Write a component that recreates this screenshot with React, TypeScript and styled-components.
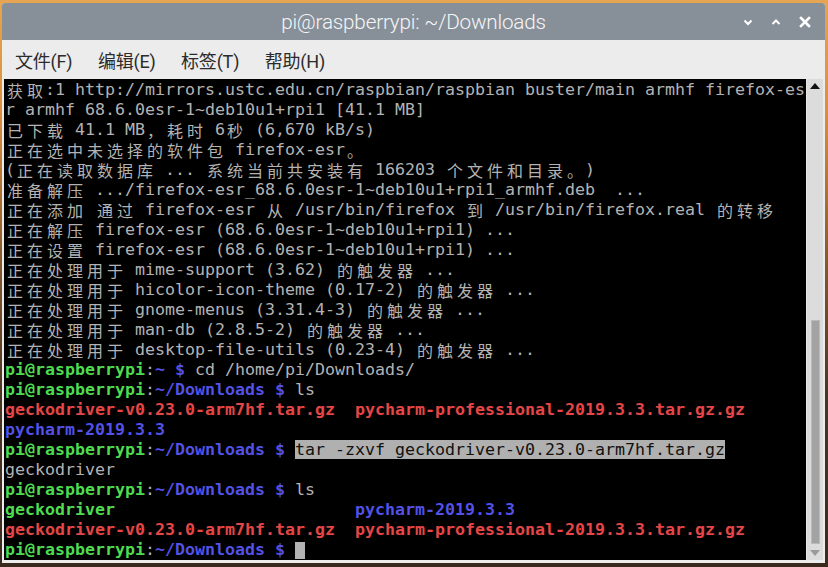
import React from "react";
import styled, { createGlobalStyle } from "styled-components";

const Global = createGlobalStyle`
  html, body { margin: 0; padding: 0; }
  body {
    width: 828px;
    height: 567px;
    overflow: hidden;
    background: linear-gradient(to bottom, #e6a552 0%, #d98f3c 20%, #8a5a2e 45%, #4a3422 70%, #3a2a1e 100%);
  }
`;

const Window = styled.div`
  position: relative;
  margin: 3px 3px 0 2px;
  width: 823px;
  height: 560px;
  display: flex;
  flex-direction: column;
  background: #ececec;
  border-radius: 3px 3px 0 0;
  overflow: hidden;
`;

const TitleBar = styled.div`
  height: 37px;
  flex: none;
  background: #878f99;
  display: flex;
  align-items: center;
  justify-content: center;
  position: relative;
`;

const Title = styled.div`
  font-family: Roboto, "Liberation Sans", sans-serif;
  font-weight: 300;
  font-size: 20.7px;
  color: #f5f6f7;
  letter-spacing: -0.2px;
`;

const Controls = styled.div`
  position: absolute;
  right: 14px;
  top: 0;
  height: 100%;
  display: flex;
  align-items: center;
  gap: 18px;
`;

const MenuBar = styled.div`
  height: 39px;
  flex: none;
  display: flex;
  align-items: center;
  padding-left: 13px;
  gap: 25.5px;
  background: #ececec;
`;

const MenuItem = styled.span`
  font-family: Roboto, "Noto Sans CJK SC", sans-serif;
  font-size: 18px;
  color: #2b2b2b;
  letter-spacing: -0.2px;
`;

const Body = styled.div`
  flex: 1;
  display: flex;
  margin: 0 2px 3px 2px;
`;

const Screen = styled.div`
  flex: 1;
  background: #000;
  padding: 1px 0 0 1px;
  overflow: hidden;
`;

const Line = styled.div`
  height: 20px;
  line-height: 20px;
  white-space: pre;
  font-family: "DejaVu Sans Mono", "Noto Sans CJK SC", monospace;
  font-size: 16.61px;
  color: #b3b3b3;
`;

const colors: Record<string, string> = {
  n: "#b3b3b3",
  g: "#4fdb4f",
  b: "#5252e6",
  r: "#e64646",
  s: "#111111",
};

const Seg = styled.span<{ $k: string }>`
  color: ${(p) => colors[p.$k]};
  font-weight: ${(p) => (p.$k === "g" || p.$k === "b" || p.$k === "r" ? "bold" : "normal")};
  background: ${(p) => (p.$k === "s" ? "#b0b0b0" : "transparent")};
`;

const Wide = styled.span`
  display: inline-block;
  width: 20px;
  text-align: center;
  font-family: "Noto Sans CJK SC", sans-serif;
  font-size: 16px;
  line-height: 20px;
  vertical-align: top;
`;

const Cursor = styled.span`
  display: inline-block;
  width: 10px;
  height: 17px;
  background: #b3b3b3;
  vertical-align: top;
  margin-top: 2px;
`;

const Scrollbar = styled.div`
  width: 16px;
  flex: none;
  background: #dcdcdc;
  border-left: 1px solid #e8e8e8;
  display: flex;
  flex-direction: column;
  align-items: center;
`;

const ArrowBox = styled.div`
  height: 14px;
  flex: none;
  display: flex;
  align-items: center;
  justify-content: center;
`;

const Track = styled.div`
  flex: 1;
  width: 100%;
  display: flex;
  flex-direction: column;
  justify-content: flex-end;
  align-items: center;
  padding-bottom: 2px;
`;

const Thumb = styled.div<{ $h: number }>`
  width: 9px;
  height: ${(p) => p.$h}px;
  background: #a3a3a3;
  border: 1px solid #b9b9b9;
  box-sizing: border-box;
`;

const WIDE_RE = /[\u1100-\u115F\u2E80-\uA4CF\uAC00-\uD7A3\uF900-\uFAFF\uFE30-\uFE4F\uFF00-\uFF60\uFFE0-\uFFE6\u3000-\u303F]/;

function renderText(text: string) {
  const out: React.ReactNode[] = [];
  let buf = "";
  let i = 0;
  for (const ch of text) {
    if (WIDE_RE.test(ch)) {
      if (buf) {
        out.push(buf);
        buf = "";
      }
      out.push(<Wide key={i}>{ch}</Wide>);
    } else {
      buf += ch;
    }
    i++;
  }
  if (buf) out.push(buf);
  return out;
}

type Segment = [string, string];

const P = (path: string): Segment[] => [
  ["pi@raspberrypi", "g"],
  [":", "n"],
  [path + " $", "b"],
];

const lines: Segment[][] = [
  [["获取:1 http://mirrors.ustc.edu.cn/raspbian/raspbian buster/main armhf firefox-es", "n"]],
  [["r armhf 68.6.0esr-1~deb10u1+rpi1 [41.1 MB]", "n"]],
  [["已下载 41.1 MB，耗时 6秒 (6,670 kB/s)", "n"]],
  [["正在选中未选择的软件包 firefox-esr。", "n"]],
  [["(正在读取数据库 ... 系统当前共安装有 166203 个文件和目录。)", "n"]],
  [["准备解压 .../firefox-esr_68.6.0esr-1~deb10u1+rpi1_armhf.deb  ...", "n"]],
  [["正在添加 通过 firefox-esr 从 /usr/bin/firefox 到 /usr/bin/firefox.real 的转移", "n"]],
  [["正在解压 firefox-esr (68.6.0esr-1~deb10u1+rpi1) ...", "n"]],
  [["正在设置 firefox-esr (68.6.0esr-1~deb10u1+rpi1) ...", "n"]],
  [["正在处理用于 mime-support (3.62) 的触发器 ...", "n"]],
  [["正在处理用于 hicolor-icon-theme (0.17-2) 的触发器 ...", "n"]],
  [["正在处理用于 gnome-menus (3.31.4-3) 的触发器 ...", "n"]],
  [["正在处理用于 man-db (2.8.5-2) 的触发器 ...", "n"]],
  [["正在处理用于 desktop-file-utils (0.23-4) 的触发器 ...", "n"]],
  [...P("~"), [" cd /home/pi/Downloads/", "n"]],
  [...P("~/Downloads"), [" ls", "n"]],
  [["geckodriver-v0.23.0-arm7hf.tar.gz", "r"], ["  ", "n"], ["pycharm-professional-2019.3.3.tar.gz.gz", "r"]],
  [["pycharm-2019.3.3", "b"]],
  [...P("~/Downloads"), [" ", "n"], ["tar -zxvf geckodriver-v0.23.0-arm7hf.tar.gz", "s"]],
  [["geckodriver", "n"]],
  [...P("~/Downloads"), [" ls", "n"]],
  [["geckodriver", "g"], ["                        ", "n"], ["pycharm-2019.3.3", "b"]],
  [["geckodriver-v0.23.0-arm7hf.tar.gz", "r"], ["  ", "n"], ["pycharm-professional-2019.3.3.tar.gz.gz", "r"]],
  [...P("~/Downloads"), [" ", "n"]],
];

const Chevron = ({ up }: { up?: boolean }) => (
  <svg width="10" height="8" viewBox="0 0 10 8">
    <path
      d={up ? "M1.5 6 L5 2.5 L8.5 6" : "M1.5 2.5 L5 6 L8.5 2.5"}
      fill="none"
      stroke="#ffffff"
      strokeWidth="2"
    />
  </svg>
);

const Close = () => (
  <svg width="12" height="12" viewBox="0 0 12 12">
    <path d="M2 2 L10 10 M10 2 L2 10" stroke="#ffffff" strokeWidth="2.6" strokeLinecap="square" />
  </svg>
);

export default function App() {
  return (
    <>
      <Global />
      <Window>
        <TitleBar>
          <Title>pi@raspberrypi: ~/Downloads</Title>
          <Controls>
            <Chevron />
            <Chevron up />
            <Close />
          </Controls>
        </TitleBar>
        <MenuBar>
          <MenuItem>文件(F)</MenuItem>
          <MenuItem>编辑(E)</MenuItem>
          <MenuItem>标签(T)</MenuItem>
          <MenuItem>帮助(H)</MenuItem>
        </MenuBar>
        <Body>
          <Screen>
            {lines.map((segs, li) => (
              <Line key={li}>
                {segs.map(([t, k], si) => (
                  <Seg key={si} $k={k}>
                    {renderText(t)}
                  </Seg>
                ))}
                {li === lines.length - 1 && <Cursor />}
              </Line>
            ))}
          </Screen>
          <Scrollbar>
            <ArrowBox>
              <svg width="10" height="6" viewBox="0 0 10 6">
                <path d="M0 6 L5 0 L10 6 Z" fill="#111" />
              </svg>
            </ArrowBox>
            <Track>
              <Thumb $h={224} />
            </Track>
            <ArrowBox>
              <svg width="10" height="6" viewBox="0 0 10 6">
                <path d="M0 0 L5 6 L10 0 Z" fill="#9a9a9a" />
              </svg>
            </ArrowBox>
          </Scrollbar>
        </Body>
      </Window>
    </>
  );
}
